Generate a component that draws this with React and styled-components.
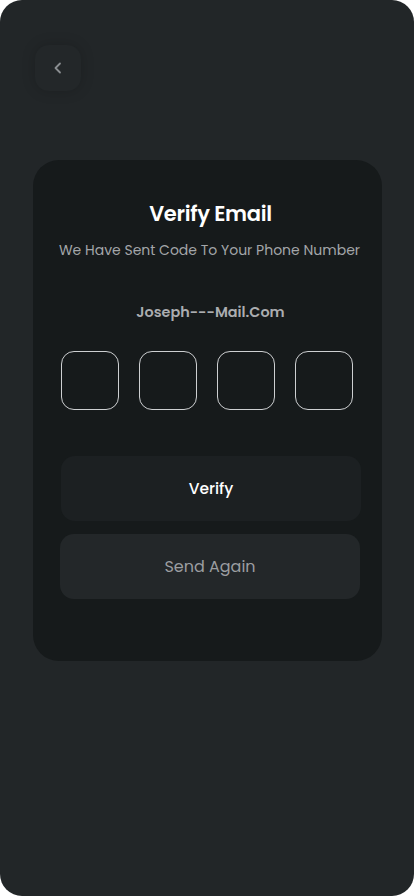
import React from "react";
import styled, { createGlobalStyle } from "styled-components";

const Global = createGlobalStyle`
  html, body { margin: 0; padding: 0; background: #ffffff; }
  body { font-family: "Poppins", "Inter", "Noto Sans", sans-serif; }
  * { box-sizing: border-box; }
`;

const Screen = styled.div`
  width: 414px;
  height: 896px;
  background: #222628;
  border-radius: 22px;
  display: flex;
  flex-direction: column;
  padding: 45px 32px 0 33px;
`;

const BackButton = styled.button`
  width: 46px;
  height: 46px;
  margin-left: 2px;
  border: none;
  border-radius: 14px;
  background: #232729;
  box-shadow: 0 0 14px rgba(0, 0, 0, 0.18);
  display: flex;
  align-items: center;
  justify-content: center;
  padding: 0;
  color: #8a8e91;
`;

const Card = styled.div`
  margin-top: 69px;
  width: 349px;
  height: 501px;
  background: #161a1b;
  border-radius: 26px;
  display: flex;
  flex-direction: column;
  align-items: center;
  padding: 40px 0 0 4px;
`;

const Title = styled.h1`
  margin: 0 0 0 2px;
  font-size: 21px;
  font-weight: 600;
  color: #ffffff;
  letter-spacing: -0.3px;
  line-height: 28px;
`;

const Subtitle = styled.p`
  margin: 12px 0 0;
  font-size: 14px;
  font-weight: 400;
  color: #a3a6a9;
  line-height: 20px;
  white-space: nowrap;
`;

const Email = styled.p`
  margin: 42px 0 0 2px;
  font-size: 14.4px;
  font-weight: 600;
  color: #abadb0;
  line-height: 20px;
`;

const OtpRow = styled.div`
  margin-top: 29px;
  display: flex;
  gap: 20px;
  align-self: flex-start;
  margin-left: 24px;
`;

const OtpBox = styled.div`
  width: 58px;
  height: 59px;
  border: 1.6px solid #cdcfd1;
  border-radius: 13px;
  background: transparent;
`;

const Button = styled.button`
  width: 300px;
  height: 65px;
  border: none;
  border-radius: 14px;
  background: ${(p) => (p.$secondary ? "#232729" : "#1c2022")};
  color: ${(p) => (p.$secondary ? "#9c9ea1" : "#ffffff")};
  font-family: inherit;
  font-size: ${(p) => (p.$secondary ? "16px" : "15.5px")};
  font-weight: ${(p) => (p.$secondary ? 400 : 500)};
  align-self: flex-start;
  margin-left: ${(p) => (p.$secondary ? "23px" : "24px")};
  margin-top: ${(p) => p.$top}px;
`;

export default function App() {
  return (
    <>
      <Global />
      <Screen>
        <BackButton aria-label="Back">
          <svg width="14" height="14" viewBox="0 0 14 14" fill="none">
            <path d="M9 2.5L4.5 7L9 11.5" stroke="currentColor" strokeWidth="1.8" strokeLinecap="round" strokeLinejoin="round" />
          </svg>
        </BackButton>
        <Card>
          <Title>Verify Email</Title>
          <Subtitle>We Have Sent Code To Your Phone Number</Subtitle>
          <Email>Joseph---Mail.Com</Email>
          <OtpRow>
            <OtpBox />
            <OtpBox />
            <OtpBox />
            <OtpBox />
          </OtpRow>
          <Button $top={46}>Verify</Button>
          <Button $secondary $top={13}>Send Again</Button>
        </Card>
      </Screen>
    </>
  );
}
